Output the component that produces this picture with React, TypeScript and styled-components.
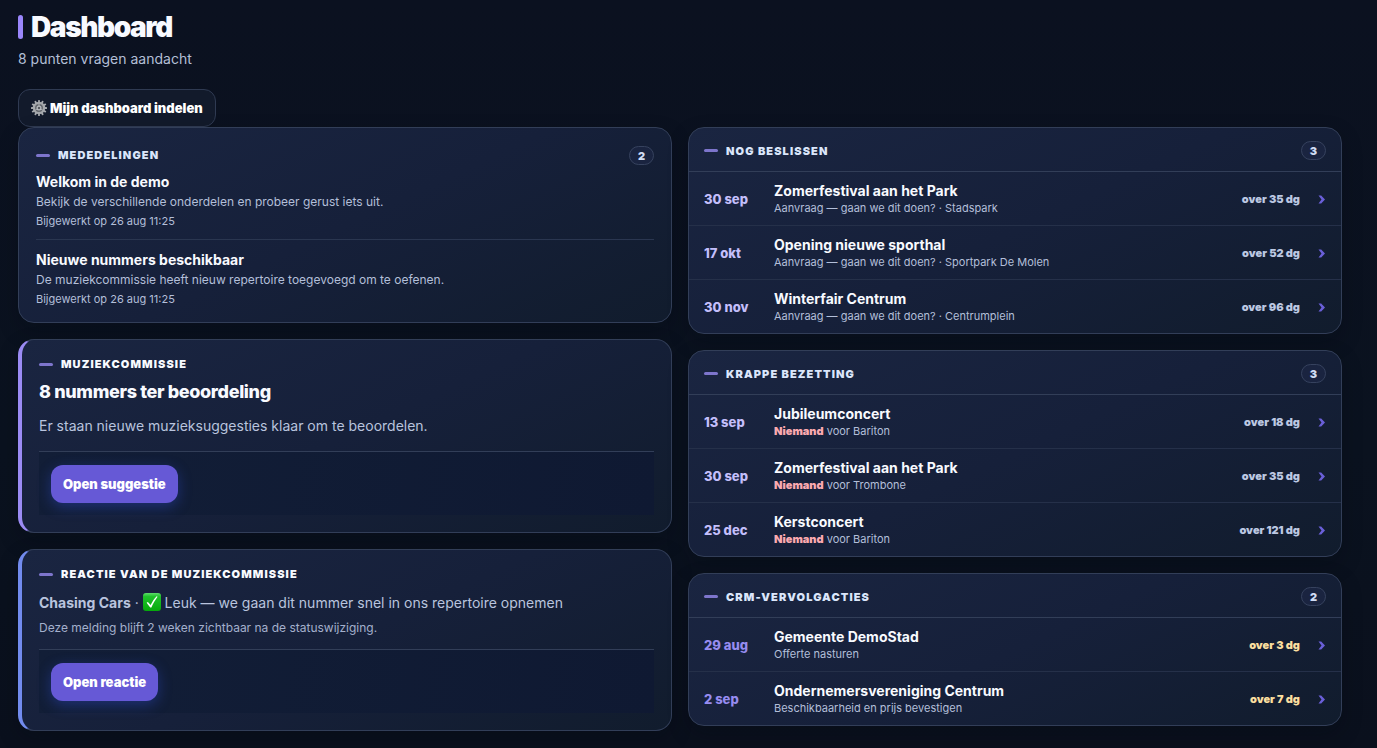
import React from "react";
import styled, { createGlobalStyle } from "styled-components";

const GlobalStyle = createGlobalStyle`
  *, *::before, *::after { box-sizing: border-box; }
  html { background: #0a111e; }
  body {
    margin: 0;
    min-height: 100vh;
    background: linear-gradient(180deg, #0b1120 0%, #0a121f 60%, #0a101d 100%);
    color: #f8faff;
    font-family: Inter, "Liberation Sans", sans-serif;
    font-size: 14px;
    line-height: 20px;
  }
  h1, h2, h3, p, ul { margin: 0; padding: 0; }
  ul { list-style: none; }
`;

const Page = styled.main`
  padding: 12px 35px 16px 18px;
`;

const PageHeader = styled.header`
  display: flex;
  flex-direction: column;
  align-items: flex-start;
`;

const PageTitle = styled.h1`
  display: flex;
  align-items: center;
  gap: 8px;
  font-size: 28px;
  line-height: 30px;
  font-weight: 900;
  letter-spacing: -0.05em;

  &::before {
    content: "";
    width: 5px;
    height: 24px;
    border-radius: 3px;
    background: #9a86fb;
  }
`;

const Subtitle = styled.p`
  margin: 7px 0 20px;
  color: #b3bfd6;
`;

const ArrangeButton = styled.button`
  display: flex;
  align-items: center;
  gap: 3px;
  height: 38px;
  padding: 0 12px;
  border: 1px solid #2f3a52;
  border-radius: 12px;
  background: #121a2b;
  color: #fff;
  font: 900 13px/18px Inter, "Liberation Sans", sans-serif;
  cursor: pointer;
`;

const Columns = styled.div`
  display: grid;
  grid-template-columns: repeat(2, minmax(0, 1fr));
  align-items: start;
  gap: 16px;
`;

const Column = styled.div`
  display: flex;
  flex-direction: column;
  gap: 16px;
`;

const Card = styled.section<{ $accent?: string }>`
  overflow: hidden;
  border: 1px solid #323e58;
  border-radius: 16px;
  background: linear-gradient(155deg, #1a2541 0%, #16203a 50%, #111c2d 100%);
  box-shadow: 0 8px 20px rgba(2, 6, 16, 0.25);
  ${(p) => p.$accent && `border-left: 4px solid ${p.$accent};`}
`;

const PaddedCard = styled(Card)`
  padding: ${(p) => (p.$accent ? "14px 17px 17px" : "17px 17px 13px")};
`;

const CardHead = styled.header<{ $ruled?: boolean }>`
  display: flex;
  align-items: center;
  justify-content: space-between;
  ${(p) => p.$ruled && "height: 44px; padding: 2px 15px 0; border-bottom: 1px solid #323e58;"}
`;

const CardTitle = styled.h2<{ $bright?: boolean }>`
  display: flex;
  align-items: center;
  gap: 8px;
  font-size: 11px;
  line-height: 20px;
  font-weight: 900;
  letter-spacing: 0.1em;
  text-transform: uppercase;
  color: ${(p) => (p.$bright ? "#f8faff" : "#dbe6fb")};

  &::before {
    content: "";
    width: 14px;
    height: 3px;
    border-radius: 2px;
    background: #7d75cc;
  }
`;

const Count = styled.span`
  min-width: 25px;
  height: 19px;
  padding: 0 7px;
  border: 1px solid #36425e;
  border-radius: 10px;
  background: #1a2440;
  color: #d0dcf4;
  font-size: 11px;
  line-height: 18px;
  font-weight: 900;
  text-align: center;
`;

const Notice = styled.li`
  padding-bottom: 8px;

  & + & {
    border-top: 1px solid #2a3650;
    padding: 10px 0 0;
  }
`;

const NoticeList = styled.ul`
  padding-top: 7px;
`;

const NoticeTitle = styled.h3`
  font-size: 14px;
  line-height: 20px;
  font-weight: 700;
`;

const NoticeText = styled.p`
  font-size: 12px;
  line-height: 19px;
  color: #b3bfd9;
`;

const NoticeMeta = styled.p`
  font-size: 11px;
  line-height: 20px;
  color: #b3bfd9;
`;

const Lead = styled.h3`
  margin-top: 6px;
  font-size: 18px;
  line-height: 24px;
  font-weight: 800;
  letter-spacing: -0.02em;
`;

const Body = styled.p<{ $top: number }>`
  margin-top: ${(p) => p.$top}px;
  line-height: 20px;
  color: #b9c4de;
  svg { vertical-align: -3px; }
`;

const Hint = styled.p`
  margin-top: 6px;
  font-size: 12px;
  line-height: 18px;
  color: #a4b0cc;
`;

const Actions = styled.footer<{ $top: number }>`
  margin-top: ${(p) => p.$top}px;
  padding: 13px 12px 12px;
  border-top: 1px solid #323e58;
  background: linear-gradient(100deg, #121e37, #0f1932);
`;

const OpenLink = styled.a`
  display: inline-block;
  padding: 10px 12px;
  border-radius: 12px;
  background: #6659d6;
  box-shadow: 0 4px 14px rgba(50, 82, 220, 0.38);
  color: #fff;
  font-size: 13px;
  line-height: 18px;
  font-weight: 900;
  text-decoration: none;
  vertical-align: top;
`;

const RowLink = styled.a`
  display: grid;
  grid-template-columns: 58px minmax(0, 1fr) auto 14px;
  align-items: center;
  column-gap: 12px;
  height: 53px;
  padding: 0 15px;
  color: inherit;
  text-decoration: none;
`;

const Row = styled.li`
  & + & { border-top: 1px solid #253049; }
`;

const RowDate = styled.time<{ $due?: boolean }>`
  font-size: 13px;
  line-height: 18px;
  font-weight: 800;
  color: ${(p) => (p.$due ? "#968cf0" : "#c4bffb")};
`;

const RowTitle = styled.h3`
  font-size: 14px;
  line-height: 18px;
  font-weight: 700;
`;

const RowText = styled.p`
  font-size: 11px;
  line-height: 16px;
  color: #b3bfd9;

  strong { color: #fbaab0; font-weight: 900; }
`;

const RowDue = styled.span<{ $soon?: boolean }>`
  font-size: 11px;
  line-height: 16px;
  font-weight: 900;
  color: ${(p) => (p.$soon ? "#fbdf9f" : "#bcc8e2")};
`;

const Chevron = styled.svg`
  justify-self: end;
  margin-top: 2px;
`;

const teeth = Array.from({ length: 12 }, (_, i) => i * 30);

const GearIcon = () => (
  <svg width="16" height="16" viewBox="0 0 16 16" aria-hidden="true">
    <g fill="#a5a8ac">
      {teeth.map((a) => (
        <rect key={a} x="7.1" y="0" width="1.8" height="2.8" rx="0.5" transform={`rotate(${a} 8 8)`} />
      ))}
    </g>
    <circle cx="8" cy="8" r="5.1" fill="#63676d" stroke="#a5a8ac" strokeWidth="2.2" />
    <g stroke="#a5a8ac" strokeWidth="1">
      <path d="M8 8V3M8 8l4.3 2.5M8 8l-4.3 2.5" />
    </g>
    <circle cx="8" cy="8" r="1.9" fill="#55595f" stroke="#b9bcc0" strokeWidth="1.2" />
  </svg>
);

const CheckIcon = () => (
  <svg width="18" height="18" viewBox="0 0 18 18" role="img" aria-label="Goedgekeurd">
    <defs>
      <linearGradient id="check-fill" x1="0" y1="0" x2="0" y2="1">
        <stop offset="0" stopColor="#5fdc6c" />
        <stop offset="0.2" stopColor="#1fc32b" />
        <stop offset="1" stopColor="#06a90b" />
      </linearGradient>
    </defs>
    <rect width="18" height="18" rx="3" fill="url(#check-fill)" />
    <path d="M3.600 9.800l1.300-.9 2.700 3.200C9.200 8.700 11.200 5.600 13.600 3.200l1 .6C12.200 7 10.200 10.500 8.400 14.400H7.200z" fill="#fff" />
  </svg>
);

type Item = { date: string; title: string; alert?: string; text: string; due: string; soon?: boolean };

const panels: { title: string; items: Item[] }[] = [
  {
    title: "Nog beslissen",
    items: [
      { date: "30 sep", title: "Zomerfestival aan het Park", text: "Aanvraag — gaan we dit doen? · Stadspark", due: "over 35 dg" },
      { date: "17 okt", title: "Opening nieuwe sporthal", text: "Aanvraag — gaan we dit doen? · Sportpark De Molen", due: "over 52 dg" },
      { date: "30 nov", title: "Winterfair Centrum", text: "Aanvraag — gaan we dit doen? · Centrumplein", due: "over 96 dg" },
    ],
  },
  {
    title: "Krappe bezetting",
    items: [
      { date: "13 sep", title: "Jubileumconcert", alert: "Niemand", text: " voor Bariton", due: "over 18 dg" },
      { date: "30 sep", title: "Zomerfestival aan het Park", alert: "Niemand", text: " voor Trombone", due: "over 35 dg" },
      { date: "25 dec", title: "Kerstconcert", alert: "Niemand", text: " voor Bariton", due: "over 121 dg" },
    ],
  },
  {
    title: "CRM-vervolgacties",
    items: [
      { date: "29 aug", title: "Gemeente DemoStad", text: "Offerte nasturen", due: "over 3 dg", soon: true },
      { date: "2 sep", title: "Ondernemersvereniging Centrum", text: "Beschikbaarheid en prijs bevestigen", due: "over 7 dg", soon: true },
    ],
  },
];

const notices = [
  { title: "Welkom in de demo", text: "Bekijk de verschillende onderdelen en probeer gerust iets uit." },
  { title: "Nieuwe nummers beschikbaar", text: "De muziekcommissie heeft nieuw repertoire toegevoegd om te oefenen." },
];

export default function App() {
  return (
    <Page>
      <GlobalStyle />
      <PageHeader>
        <PageTitle>Dashboard</PageTitle>
        <Subtitle>8 punten vragen aandacht</Subtitle>
        <ArrangeButton type="button">
          <GearIcon />
          Mijn dashboard indelen
        </ArrangeButton>
      </PageHeader>
      <Columns>
        <Column>
          <PaddedCard>
            <CardHead>
              <CardTitle>Mededelingen</CardTitle>
              <Count>2</Count>
            </CardHead>
            <NoticeList>
              {notices.map((n) => (
                <Notice key={n.title}>
                  <NoticeTitle>{n.title}</NoticeTitle>
                  <NoticeText>{n.text}</NoticeText>
                  <NoticeMeta>Bijgewerkt op 26 aug 11:25</NoticeMeta>
                </Notice>
              ))}
            </NoticeList>
          </PaddedCard>
          <PaddedCard $accent="#9b8bf4">
            <CardTitle $bright>Muziekcommissie</CardTitle>
            <Lead>8 nummers ter beoordeling</Lead>
            <Body $top={12}>Er staan nieuwe muzieksuggesties klaar om te beoordelen.</Body>
            <Actions $top={15}>
              <OpenLink href="#suggestie">Open suggestie</OpenLink>
            </Actions>
          </PaddedCard>
          <PaddedCard $accent="#728bee">
            <CardTitle $bright>Reactie van de muziekcommissie</CardTitle>
            <Body $top={9}>
              <strong>Chasing Cars</strong> · <CheckIcon /> Leuk — we gaan dit nummer snel in ons repertoire opnemen
            </Body>
            <Hint>Deze melding blijft 2 weken zichtbaar na de statuswijziging.</Hint>
            <Actions $top={12}>
              <OpenLink href="#reactie">Open reactie</OpenLink>
            </Actions>
          </PaddedCard>
        </Column>
        <Column>
          {panels.map((panel) => (
            <Card key={panel.title}>
              <CardHead $ruled>
                <CardTitle>{panel.title}</CardTitle>
                <Count>{panel.items.length}</Count>
              </CardHead>
              <ul>
                {panel.items.map((item) => (
                  <Row key={item.title}>
                    <RowLink href="#details">
                      <RowDate $due={item.soon}>{item.date}</RowDate>
                      <div>
                        <RowTitle>{item.title}</RowTitle>
                        <RowText>
                          {item.alert && <strong>{item.alert}</strong>}
                          {item.text}
                        </RowText>
                      </div>
                      <RowDue $soon={item.soon}>{item.due}</RowDue>
                      <Chevron width="8" height="9" viewBox="0 0 8 9" aria-hidden="true">
                        <path d="M.5.5h2.700L7 4.500 3.200 8.500H.5L3.500 4.500z" fill="#6a5fd8" />
                      </Chevron>
                    </RowLink>
                  </Row>
                ))}
              </ul>
            </Card>
          ))}
        </Column>
      </Columns>
    </Page>
  );
}
